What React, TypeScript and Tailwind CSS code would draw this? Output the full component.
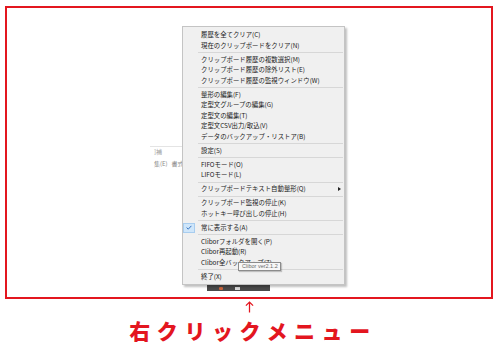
import { Fragment } from "react";

type Row =
  | { kind: "item"; label: string; checked?: boolean; sub?: boolean }
  | { kind: "sep" };

const rows: Row[] = [
  { kind: "item", label: "履歴を全てクリア(C)" },
  { kind: "item", label: "現在のクリップボードをクリア(N)" },
  { kind: "sep" },
  { kind: "item", label: "クリップボード履歴の複数選択(M)" },
  { kind: "item", label: "クリップボード履歴の除外リスト(E)" },
  { kind: "item", label: "クリップボード履歴の監視ウィンドウ(W)" },
  { kind: "sep" },
  { kind: "item", label: "整形の編集(F)" },
  { kind: "item", label: "定型文グループの編集(G)" },
  { kind: "item", label: "定型文の編集(T)" },
  { kind: "item", label: "定型文CSV出力/取込(V)" },
  { kind: "item", label: "データのバックアップ・リストア(B)" },
  { kind: "sep" },
  { kind: "item", label: "設定(S)" },
  { kind: "sep" },
  { kind: "item", label: "FIFOモード(O)" },
  { kind: "item", label: "LIFOモード(L)" },
  { kind: "sep" },
  { kind: "item", label: "クリップボードテキスト自動整形(Q)", sub: true },
  { kind: "sep" },
  { kind: "item", label: "クリップボード監視の停止(K)" },
  { kind: "item", label: "ホットキー呼び出しの停止(H)" },
  { kind: "sep" },
  { kind: "item", label: "常に表示する(A)", checked: true },
  { kind: "sep" },
  { kind: "item", label: "Cliborフォルダを開く(P)" },
  { kind: "item", label: "Clibor再起動(R)" },
  { kind: "item", label: "Clibor全バックアップ(Z)" },
  { kind: "sep" },
  { kind: "item", label: "終了(X)" },
];

function ContextMenu() {
  return (
    <div className="relative z-10 ml-[175px] mt-[18px] h-[259px] w-[163px] border border-[#c4c4c4] bg-[#f0f0f0] pt-[3px] shadow-[2px_2px_2px_rgba(0,0,0,0.25)]">
      {rows.map((row, i) => {
        if (row.kind === "sep") {
          return (
            <div key={i} className="ml-[15px] mr-px flex h-[3.5px] items-center">
              <div className="h-px w-full bg-[#d7d7d7]" />
            </div>
          );
        }
        if (row.checked) {
          return (
            <div key={i} className="flex h-[10.5px] items-center">
              <span className="flex h-[10px] w-[12px] items-center justify-center border border-[#a8cdef] bg-[#cfe6fa]">
                <svg viewBox="0 0 8 6" className="h-[5px] w-[6px]">
                  <path d="M0.8 3.1 L3 5.2 L7.2 0.8" fill="none" stroke="#2f6fc0" strokeWidth="1.3" />
                </svg>
              </span>
              <span className="ml-[6px] text-[6.4px] leading-none text-[#1a1a1a]">{row.label}</span>
            </div>
          );
        }
        return (
          <div key={i} className="flex h-[10.5px] items-center justify-between pl-[18px] pr-[3px]">
            <span className="text-[6.4px] leading-none text-[#1a1a1a]">{row.label}</span>
            {row.sub ? (
              <span className="h-0 w-0 border-y-[2.5px] border-l-[3px] border-y-transparent border-l-[#222]" />
            ) : null}
          </div>
        );
      })}
    </div>
  );
}

export default function App() {
  return (
    <div className="relative flex h-[350px] w-[500px] flex-col overflow-hidden bg-white font-['Noto_Sans_CJK_JP','Liberation_Sans',sans-serif]">
      <div className="relative ml-[5px] mt-[6px] h-[293px] w-[488px] border-2 border-[#e3161f]">
        {/* window behind the menu */}
        <div className="absolute left-[143px] top-[138px] h-px w-[32px] bg-[#e4e4e4]" />
        <span className="absolute left-[147px] top-[141px] text-[6px] leading-none text-[#a0a0a0]">]補</span>
        <span className="absolute left-[147px] top-[153px] whitespace-pre text-[6px] leading-none text-[#8a8a8a]">
          集(E)   書式
        </span>

        {/* taskbar */}
        <div className="absolute left-[200px] top-[274px] flex h-[9px] w-[63px] items-end gap-[12px] bg-[#4a4a4a] pb-[1px] pl-[12px]">
          <span className="h-[3px] w-[4px] rounded-[1px] bg-[#c9643c]" />
          <span className="h-[3px] w-[5px] bg-[#d8d8d8]" />
        </div>

        <ContextMenu />

        {/* tooltip */}
        <div className="absolute left-[231px] top-[254px] z-20 flex h-[9px] w-[43px] items-center border border-[#8c8c8c] bg-[#f7f7f7] pl-[3px] shadow-[1px_1px_1px_rgba(0,0,0,0.2)]">
          <span className="whitespace-nowrap font-['Liberation_Sans',sans-serif] text-[5.5px] leading-none text-[#6a6a6a]">
            Clibor ver2.1.2
          </span>
        </div>
      </div>

      <div className="mt-[2px] flex justify-center pr-[2px]">
        <svg viewBox="0 0 10 13" className="h-[12px] w-[9px]">
          <path d="M5 12.5 V1 M1 5 L5 1 L9 5" fill="none" stroke="#e3161f" strokeWidth="1.4" />
        </svg>
      </div>

      <div className="mt-[7px] flex justify-center">
        <span className="pl-[6px] text-[21px] font-black leading-none tracking-[6.6px] text-[#e3161f]">
          右クリックメニュー
        </span>
      </div>
    </div>
  );
}
